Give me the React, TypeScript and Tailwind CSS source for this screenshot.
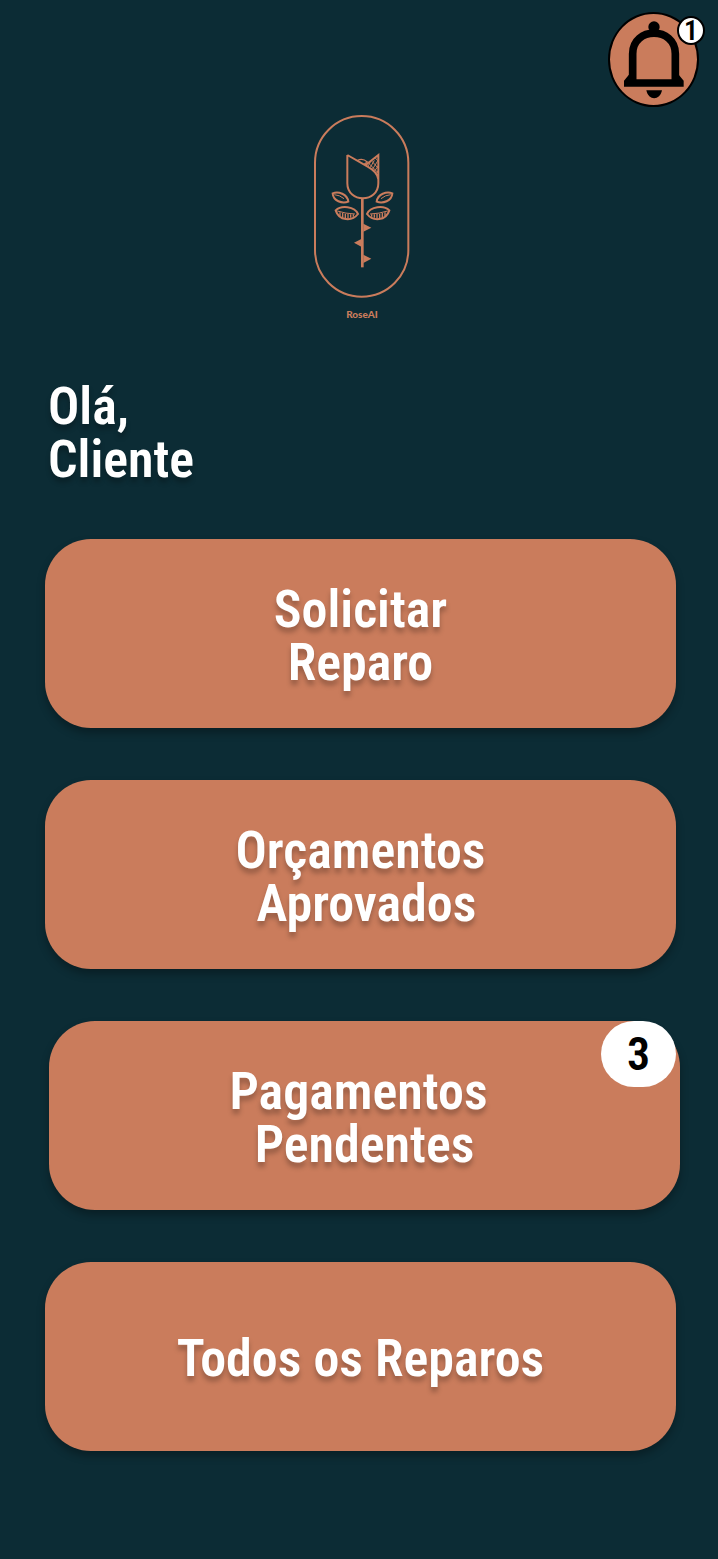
import type { ReactNode } from "react";

const textFont = "font-['Roboto_Condensed','Roboto',sans-serif] font-semibold";

function BellIcon() {
  return (
    <svg viewBox="76 62 180 234" className="h-[78px] w-[60px]" aria-hidden="true">
      <circle cx="166" cy="80" r="17" fill="black" />
      <path
        d="M102 240V160C102 78 230 78 230 160V240"
        fill="none"
        stroke="black"
        strokeWidth="23"
      />
      <path d="M92 222L76 241V259H255V241L239 222V237H92Z" fill="black" />
      <path d="M143 270H190C184 302 149 302 143 270Z" fill="black" />
    </svg>
  );
}

function Leaves() {
  return (
    <>
      <path d="M98 264C115 257 142 266 145 289C126 296 100 287 98 264Z" />
      <path d="M103 268Q119 269 132 280" strokeWidth="3" />
      <path d="M107 315C123 299 164 302 174 326C156 349 117 347 107 315Z" />
      <path d="M112 317Q137 325 165 326" strokeWidth="3" />
      <path d="M120 321V332M128 323V337M136 325V339M144 326V340M152 327V337M160 327V334" strokeWidth="4" />
    </>
  );
}

function RoseLogo() {
  return (
    <svg
      viewBox="42 29 288 549"
      className="h-[183px] w-24"
      fill="none"
      stroke="#ca7c5c"
      strokeWidth="6"
      role="img"
      aria-label="Rosa"
    >
      <rect x="45" y="32" width="280" height="542" rx="140" />
      <path d="M142 149V234C142 294 235 294 235 234V149L197 179M142 149L203 184Q232 200 235 222" />
      <path d="M172 166Q187 157 202 170L193 176" strokeWidth="4" />
      <path
        d="M204 182L211 171M211 186L223 165M218 191L233 167M224 197L235 181M230 203L235 195M216 168L235 189M208 176L234 202M226 158L235 168"
        strokeWidth="3"
      />
      <path d="M187 278V486" strokeWidth="8" />
      <path d="M190 355L214 367L190 379ZM184 401L162 412L184 424ZM190 448L214 460L190 473Z" fill="#ca7c5c" stroke="none" />
      <Leaves />
      <g transform="matrix(-1 0 0 1 375 0)">
        <Leaves />
      </g>
    </svg>
  );
}

function MenuButton({ children, className = "" }: { children: ReactNode; className?: string }) {
  return (
    <button
      type="button"
      className={`relative flex h-[189px] w-full cursor-pointer items-center justify-center rounded-[46px] bg-[#ca7c5c] pt-1 text-center text-[52px] leading-[53px] text-white shadow-[0_5px_8px_rgba(0,0,0,0.3)] text-shadow-[0_5px_5px_rgba(0,0,0,0.25)] ${className}`}
    >
      {children}
    </button>
  );
}

export default function App() {
  return (
    <main className={`relative min-h-screen bg-[#0c2c35] pt-[115px] pb-[106px] ${textFont}`}>
      <button
        type="button"
        aria-label="Notificações"
        className="absolute top-3 right-[19px] flex h-[95px] w-[91px] cursor-pointer items-center justify-center rounded-[50%] border-2 border-black bg-[#ca7c5c]"
      >
        <BellIcon />
        <span className="absolute top-0.5 -right-2 flex h-[29px] w-7 items-center justify-center rounded-[50%] border-2 border-black bg-white text-[28px] leading-6 text-black">
          1
        </span>
      </button>

      <div className="ml-1.5 flex flex-col items-center">
        <RoseLogo />
        <p className="mt-2.5 font-['Lato',sans-serif] text-[10px] leading-3 font-black text-[#ca7c5c]">RoseAI</p>
      </div>

      <h1 className="mt-[60px] pl-12 text-[52px] leading-[53px] text-white text-shadow-[0_5px_5px_rgba(0,0,0,0.25)]">
        Olá,
        <br />
        Cliente
      </h1>

      <nav className="mt-[53px] mr-[42px] ml-[45px] flex flex-col gap-[52px]">
        <MenuButton>
          <span>
            Solicitar
            <br />
            Reparo
          </span>
        </MenuButton>
        <MenuButton>
          <span className="whitespace-pre">{"Orçamentos\n Aprovados"}</span>
        </MenuButton>
        <MenuButton className="left-1 pr-3">
          <span className="whitespace-pre">{"Pagamentos\n Pendentes"}</span>
          <span className="absolute top-0 right-1 flex h-[66px] w-[75px] items-center justify-center rounded-[33px] bg-white text-[46px] leading-[46px] text-black text-shadow-none">
            3
          </span>
        </MenuButton>
        <MenuButton>Todos os Reparos</MenuButton>
      </nav>
    </main>
  );
}
